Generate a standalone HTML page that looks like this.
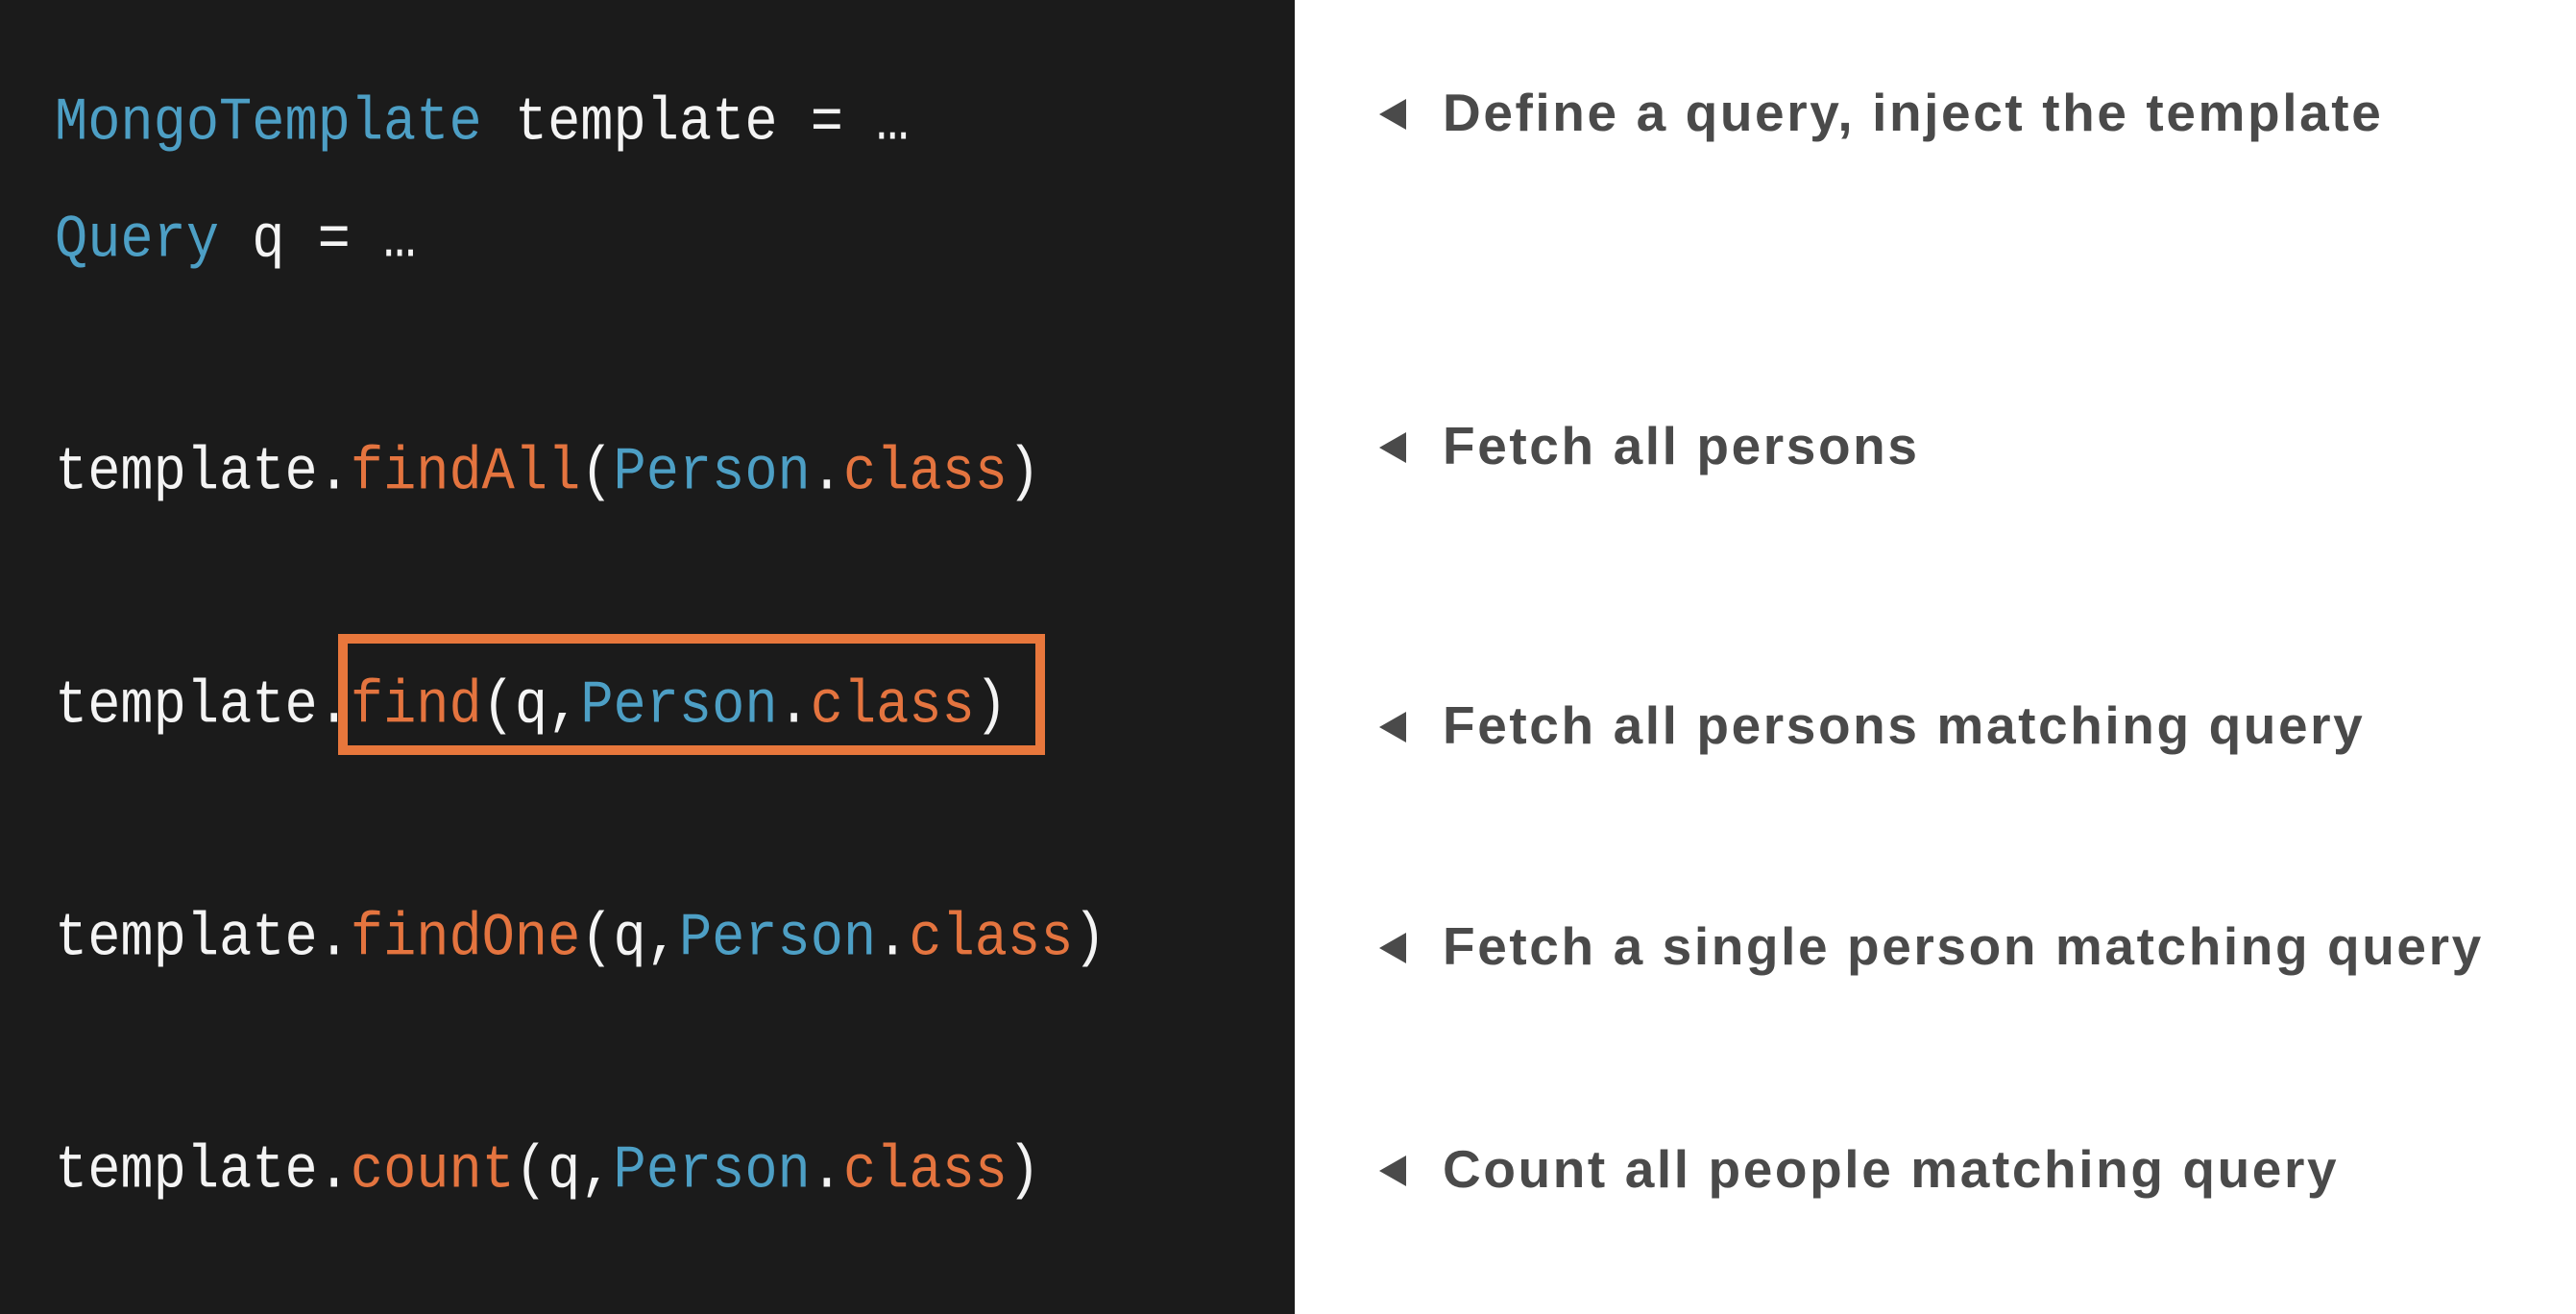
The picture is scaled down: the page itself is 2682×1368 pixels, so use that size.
<!DOCTYPE html>
<html><head><meta charset="utf-8"><style>
html,body{margin:0;padding:0;}
body{width:2682px;height:1368px;position:relative;overflow:hidden;background:#fff;}
.dark{position:absolute;left:0;top:0;width:1348px;height:1368px;background:#1b1b1b;}
.c{position:absolute;left:57px;font-family:"Liberation Mono",monospace;font-size:57px;line-height:70px;height:70px;color:#f4f4f4;white-space:pre;transform:scaleY(1.1);transform-origin:0 50%;}
.b{color:#4d9fc5}.o{color:#e4743f}
.box{position:absolute;left:352px;top:660px;width:716px;height:106px;border:10px solid #e8773c;}
.r{position:absolute;left:1436px;font-family:"Liberation Sans",sans-serif;font-weight:bold;font-size:55px;letter-spacing:2.6px;line-height:70px;height:70px;color:#4a4a4a;white-space:pre;}
.r i{display:inline-block;width:0;height:0;border-top:16px solid transparent;border-bottom:16px solid transparent;border-right:28px solid #4a4a4a;margin-right:38px;vertical-align:1px;}
</style></head><body>
<div class="dark"></div>
<div class="c" style="top:94px"><span class="b">MongoTemplate</span> template = …</div>
<div class="c" style="top:216px"><span class="b">Query</span> q = …</div>
<div class="c" style="top:458px">template.<span class="o">findAll</span>(<span class="b">Person</span>.<span class="o">class</span>)</div>
<div class="box"></div>
<div class="c" style="top:701px">template.<span class="o">find</span>(q,<span class="b">Person</span>.<span class="o">class</span>)</div>
<div class="c" style="top:943px">template.<span class="o">findOne</span>(q,<span class="b">Person</span>.<span class="o">class</span>)</div>
<div class="c" style="top:1185px">template.<span class="o">count</span>(q,<span class="b">Person</span>.<span class="o">class</span>)</div>
<div class="r" style="top:82px"><i></i>Define a query, inject the template</div>
<div class="r" style="top:429px"><i></i>Fetch all persons</div>
<div class="r" style="top:720px"><i></i>Fetch all persons matching query</div>
<div class="r" style="top:950px"><i></i>Fetch a single person matching query</div>
<div class="r" style="top:1182px"><i></i>Count all people matching query</div>
</body></html>
